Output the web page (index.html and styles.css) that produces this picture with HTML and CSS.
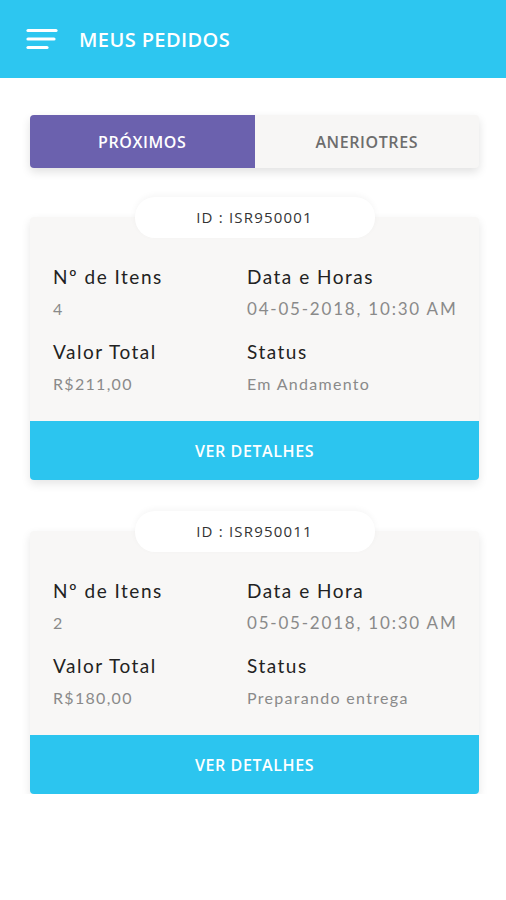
FILE: index.html
```html
<!DOCTYPE html>
<html lang="pt-BR">
<head>
    <meta charset="UTF-8">
    <meta name="viewport" content="width=device-width, initial-scale=1.0">
    <title>Meus Pedidos</title>
    <link rel="stylesheet" href="styles.css">
</head>
<body>
    <header class="app-bar">
        <svg class="menu-icon" width="32" height="24" viewBox="0 0 32 24">
            <line x1="2" y1="3.5" x2="30" y2="3.5" />
            <line x1="2" y1="12" x2="28" y2="12" />
            <line x1="2" y1="20.5" x2="21" y2="20.5" />
        </svg>
        <h1>MEUS PEDIDOS</h1>
    </header>

    <main class="content">
        <div class="tabs">
            <button class="tab active">PRÓXIMOS</button>
            <button class="tab">ANERIOTRES</button>
        </div>

        <div class="order">
            <div class="order-id">ID : ISR950001</div>
            <div class="order-card">
                <div class="order-info">
                    <div class="field">
                        <div class="label">Nº de Itens</div>
                        <div class="value">4</div>
                    </div>
                    <div class="field">
                        <div class="label">Data e Horas</div>
                        <div class="value date">04-05-2018, 10:30 AM</div>
                    </div>
                    <div class="field">
                        <div class="label">Valor Total</div>
                        <div class="value">R$211,00</div>
                    </div>
                    <div class="field">
                        <div class="label">Status</div>
                        <div class="value">Em Andamento</div>
                    </div>
                </div>
                <button class="details-btn">VER DETALHES</button>
            </div>
        </div>

        <div class="order">
            <div class="order-id">ID : ISR950011</div>
            <div class="order-card">
                <div class="order-info">
                    <div class="field">
                        <div class="label">Nº de Itens</div>
                        <div class="value">2</div>
                    </div>
                    <div class="field">
                        <div class="label">Data e Hora</div>
                        <div class="value date">05-05-2018, 10:30 AM</div>
                    </div>
                    <div class="field">
                        <div class="label">Valor Total</div>
                        <div class="value">R$180,00</div>
                    </div>
                    <div class="field">
                        <div class="label">Status</div>
                        <div class="value">Preparando entrega</div>
                    </div>
                </div>
                <button class="details-btn">VER DETALHES</button>
            </div>
        </div>
    </main>
</body>
</html>
```

FILE: styles.css
```css
body {
    margin: 0;
    font-family: "Open Sans", sans-serif;
    background-color: #fff;
}

.app-bar {
    height: 78px;
    background-color: #2dc6f0;
    display: flex;
    align-items: center;
    padding-left: 26px;
    gap: 21px;
}

.menu-icon line {
    stroke: #fff;
    stroke-width: 3.2;
    stroke-linecap: round;
}

.app-bar h1 {
    margin: 0;
    color: #fff;
    font-size: 20px;
    font-weight: 600;
    letter-spacing: 0.4px;
}

.content {
    padding: 37px 27px 0 30px;
}

/* Tabs */
.tabs {
    display: flex;
    height: 53px;
    border-radius: 4px;
    background-color: #f7f6f5;
    box-shadow: 0 4px 10px rgba(0, 0, 0, 0.12);
}

.tab {
    flex: 1;
    border: none;
    background: none;
    font-family: "Open Sans", sans-serif;
    font-size: 16px;
    font-weight: 600;
    letter-spacing: 0.6px;
    color: #6d6d6d;
}

.tab.active {
    background-color: #6b61ae;
    color: #fff;
    border-radius: 4px 0 0 4px;
}

/* Order cards */
.order {
    margin-top: 29px;
    display: flex;
    flex-direction: column;
    align-items: center;
}

.order + .order {
    margin-top: 31px;
}

.order-id {
    position: relative;
    z-index: 1;
    width: 240px;
    height: 41px;
    margin-bottom: -21px;
    border-radius: 20px;
    background-color: #fff;
    box-shadow: 0 -2px 6px rgba(0, 0, 0, 0.04);
    text-align: center;
    line-height: 40px;
    font-size: 15px;
    letter-spacing: 1.2px;
    color: #333;
}

.order-card {
    align-self: stretch;
    background-color: #f8f7f6;
    border-radius: 4px;
    box-shadow: 0 4px 10px rgba(0, 0, 0, 0.1);
    overflow: hidden;
}

.order-info {
    display: grid;
    grid-template-columns: 194px 1fr;
    row-gap: 17px;
    padding: 47px 10px 24px 23px;
    font-family: Lato, sans-serif;
}

.label {
    font-size: 19px;
    line-height: 26px;
    color: #222;
    letter-spacing: 1.5px;
}

.value {
    margin-top: 6px;
    font-size: 16px;
    line-height: 26px;
    color: #8a8a8a;
    letter-spacing: 1.3px;
}

.value.date {
    font-size: 17px;
    letter-spacing: 1.8px;
}

.details-btn {
    display: block;
    width: 100%;
    height: 59px;
    border: none;
    background-color: #2cc5ef;
    color: #fff;
    font-family: "Open Sans", sans-serif;
    font-size: 16px;
    font-weight: 600;
    letter-spacing: 0.6px;
}
```
